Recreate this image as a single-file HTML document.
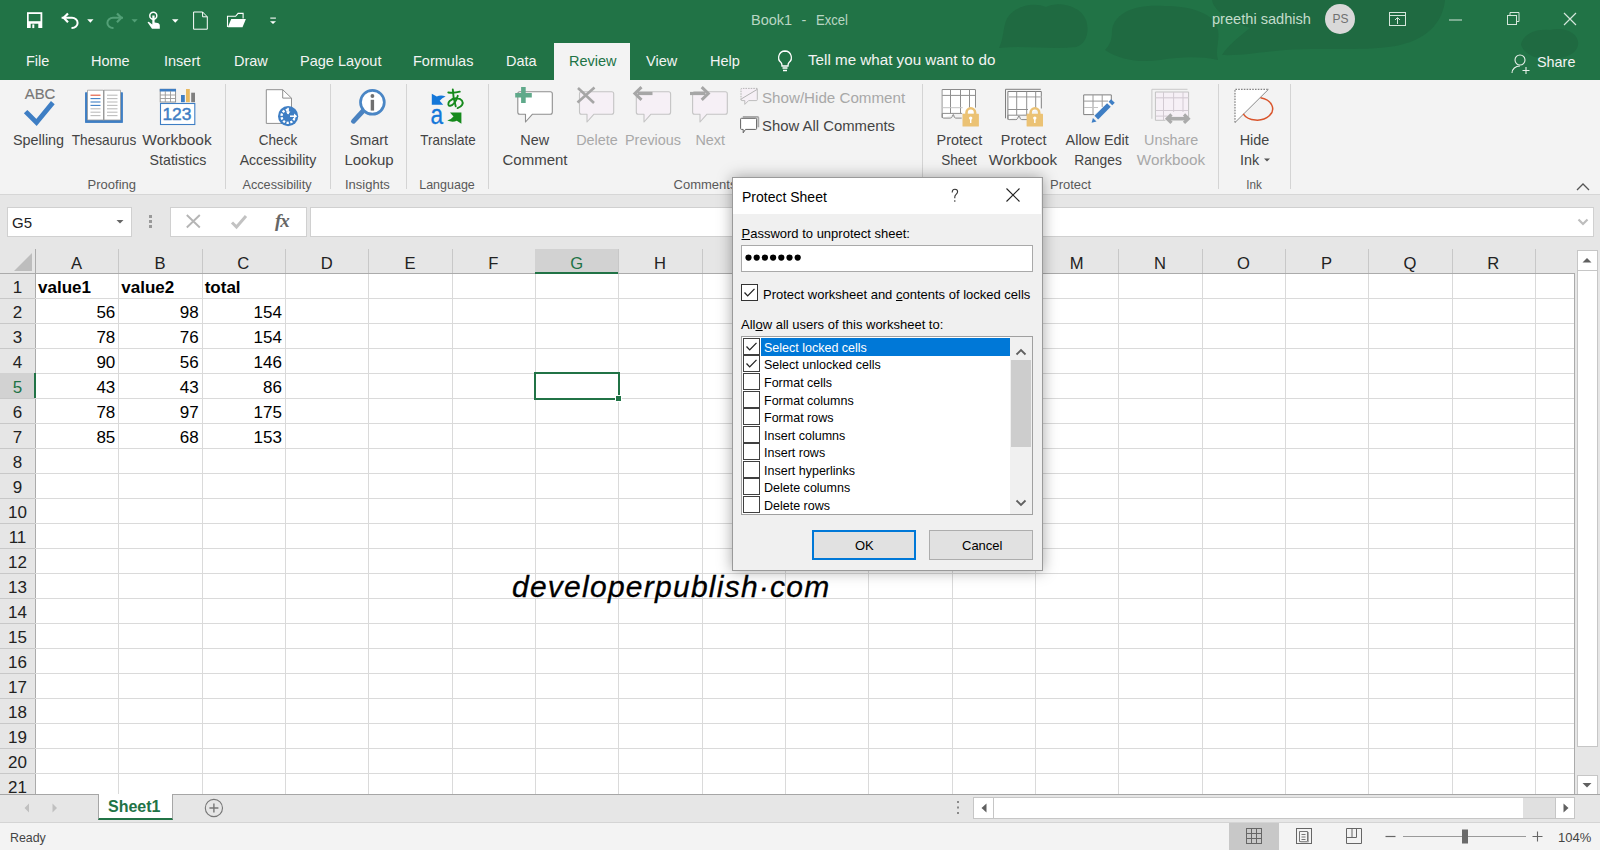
<!DOCTYPE html>
<html><head><meta charset="utf-8">
<style>
*{box-sizing:border-box;margin:0;padding:0}
html,body{width:1600px;height:850px;overflow:hidden;background:#fff;font-family:"Liberation Sans",sans-serif}
.a{position:absolute}
.t{position:absolute;white-space:nowrap;line-height:1}
#title{left:0;top:0;width:1600px;height:80px;background:#217346;overflow:hidden}
#ribbon{left:0;top:80px;width:1600px;height:115px;background:#f3f3f3;border-bottom:1px solid #d6d6d6}
.tab{color:#f3f3f3;font-size:14.5px}
.rb{color:#444;font-size:14.6px;text-align:center}
.gl{color:#666;font-size:13.4px}
.dis{color:#b1b1b1}
.sep{position:absolute;top:84px;width:1px;height:105px;background:#d4d4d4}
#fbar{left:0;top:195px;width:1600px;height:55px;background:#e6e6e6}
#grid{left:0;top:249px;width:1575px;height:546px;overflow:hidden;background:#fff}
.ch{position:absolute;top:0;height:25px;background:#e6e6e6;color:#222;font-size:16px;text-align:center}
.rh{position:absolute;left:0;width:35px;background:#e6e6e6;color:#222;font-size:16px;text-align:center}
.cell{position:absolute;font-size:16px;color:#000}
#tabs{left:0;top:794px;width:1600px;height:29px;background:#e6e6e6}
#status{left:0;top:823px;width:1600px;height:27px;background:#f3f3f3}
#dlg{left:732px;top:177px;width:311px;height:394px;background:#f0f0f0;border:1px solid #9a9a9a;box-shadow:0 0 14px rgba(0,0,0,.35)}
.li{position:absolute;left:0;height:17.5px;width:268px;font-size:13px;color:#000}
.cb{position:absolute;width:16px;height:16px;border:1px solid #333;background:#fff}
</style></head><body>

<!-- TITLE BAR -->
<div id="title" class="a">
  <svg class="a" style="left:0;top:0" width="1600" height="80">
    <g fill="#1f6a41">
      <path d="M999 48C1003 40 1003 32 1005 24C1009 8 1030 1 1046 7C1058 1 1080 5 1086 20C1090 32 1086 44 1076 47C1050 50 1025 45 999 48Z"/>
      <path d="M1105 50C1110 45 1112 40 1112 30C1115 10 1140 4 1165 6C1195 6 1215 15 1218 30C1220 40 1215 50 1218 60C1200 56 1180 57 1160 60C1140 63 1120 60 1105 50Z"/>
      <path d="M1212 0H1445C1443 20 1430 38 1400 45C1370 52 1320 47 1285 50C1260 52 1240 56 1222 55C1228 45 1240 36 1250 28C1232 22 1214 12 1212 0Z"/>
      <path d="M1521 45C1522 35 1535 28 1550 30C1565 26 1580 34 1578 45C1576 56 1560 60 1545 59C1535 58 1525 55 1521 45Z"/>
    </g>
  </svg>
  <!-- QAT -->
  <svg class="a" style="left:0;top:0" width="300" height="40" fill="none" stroke="#fff" stroke-width="1.6">
    <path d="M27 12.2h15.3v15.8H27z" fill="#fff" stroke="none"/>
    <path d="M28.7 14h11.8v7.2H28.7z" fill="#217346" stroke="none"/>
    <path d="M30.7 23.7h7.6v4.4h-7.6z" fill="#217346" stroke="none"/>
    <path d="M32.3 24.4h2v3.7h-2z" fill="#fff" stroke="none"/>
    <path d="M61.6 17.8H72a5.6 5.1 0 0 1 0 10.2h-.5" stroke-width="2"/>
    <path d="M68 13.4l-4.3 4.4l4.3 4.4" stroke-width="2.2"/>
    <path d="M87.2 19.3h6.3l-3.15 3.4z" fill="#fff" stroke="none"/>
    <path d="M123 17.8H113a5.6 5.1 0 0 0 0 10.2h.5" stroke="#53a077" stroke-width="2"/>
    <path d="M117 13.4l4.3 4.4l-4.3 4.4" stroke="#53a077" stroke-width="2.2"/>
    <path d="M131.5 19.3h6.2l-3.1 3.3z" fill="#53a077" stroke="none"/>
    <circle cx="153.3" cy="15.8" r="3.5" stroke-width="1.5"/>
    <path d="M152.3 15.5h2.3v7l3 .6c1.3.3 2.2 1.2 2.2 2.5v3.2h-7.8l-4.5-6.5l1.2-.6l3.6 2.8z" fill="#fff" stroke="none"/>
    <path d="M172 19.3h6.5l-3.25 3.5z" fill="#fff" stroke="none"/>
    <path d="M193.6 12h9l4.7 4.8v12.4h-13.7z" stroke-width="1"/>
    <path d="M202.6 12v4.8h4.7" stroke-width="1"/>
    <path d="M243.1 18.4v-5h-5l-2.5 2.9h-8.1v10.6" stroke-width="1.1"/>
    <path d="M231.2 19.1h14.7l-3.4 8.1h-14.7z" fill="#fff" stroke="none"/>
    <path d="M270.3 18.1h5.6" stroke-width="1.1"/>
    <path d="M270 21.2h6l-3 2.9z" fill="#fff" stroke="none"/>
  </svg>
  <div class="t" style="left:751px;top:12.8px;font-size:14.5px;color:#b9d6c3">Book1</div>
  <div class="t" style="left:801.6px;top:12.8px;font-size:14.5px;color:#b9d6c3">-</div>
  <div class="t" style="left:816.3px;top:12.8px;font-size:14.5px;color:#b9d6c3;transform:scaleX(.9);transform-origin:0 0">Excel</div>
  <div class="t" style="left:1212px;top:12px;font-size:14.6px;color:#c3dccb">preethi sadhish</div>
  <div class="a" style="left:1325px;top:4px;width:30px;height:30px;border-radius:50%;background:#d9d9d9"></div>
  <div class="t" style="left:1332.5px;top:13px;font-size:12px;color:#707070">PS</div>
  <svg class="a" style="left:1380px;top:0" width="220" height="40" fill="none" stroke="#d5e6db" stroke-width="1">
    <rect x="9.5" y="12.5" width="16" height="13"/>
    <path d="M10 15.5h15" />
    <path d="M17.5 24v-6M15 20l2.5-2.5L20 20"/>
    <path d="M69 20h13"/>
    <rect x="127.5" y="15.5" width="9" height="9"/>
    <path d="M130 15.5v-3h9v9h-2.5"/>
    <path d="M184 13l12 12M196 13l-12 12" stroke-width="1.2"/>
  </svg>
  <!-- tabs -->
  <div class="t tab" style="left:26px;top:54px">File</div>
  <div class="t tab" style="left:91px;top:54px">Home</div>
  <div class="t tab" style="left:164px;top:54px">Insert</div>
  <div class="t tab" style="left:234px;top:54px">Draw</div>
  <div class="t tab" style="left:300px;top:54px">Page Layout</div>
  <div class="t tab" style="left:413px;top:54px">Formulas</div>
  <div class="t tab" style="left:506px;top:54px">Data</div>
  <div class="a" style="left:554px;top:43px;width:76px;height:37px;background:#f3f3f3"></div>
  <div class="t tab" style="left:569px;top:54px;color:#217346">Review</div>
  <div class="t tab" style="left:646px;top:54px">View</div>
  <div class="t tab" style="left:710px;top:54px">Help</div>
  <svg class="a" style="left:774px;top:49px" width="22" height="24" fill="none" stroke="#fff" stroke-width="1.3">
    <path d="M11 2a6.5 6.5 0 0 0-4 11.5c1 1 1 2 1 3.5h6c0-1.5 0-2.5 1-3.5A6.5 6.5 0 0 0 11 2z"/>
    <path d="M8.5 19h5M9 21.5h4"/>
  </svg>
  <div class="t tab" style="left:808px;top:51.6px;font-size:15.2px">Tell me what you want to do</div>
  <svg class="a" style="left:1509px;top:52px" width="24" height="24" fill="none" stroke="#e8f0ea" stroke-width="1.1">
    <circle cx="11" cy="8" r="5"/>
    <path d="M3 21c0-4 3.5-7 8-7"/>
    <path d="M17 15v7M13.5 18.5h7"/>
  </svg>
  <div class="t tab" style="left:1537px;top:54.7px;font-size:14.4px">Share</div>
</div>

<!-- RIBBON -->
<div id="ribbon" class="a"></div>
<div id="ribcontent">
<svg class="a" style="left:0;top:0" width="1600" height="200">
<text x="24.8" y="98.7" font-family="Liberation Sans" font-size="15.2" fill="#777" stroke="#777" stroke-width=".15" textLength="30.5" lengthAdjust="spacingAndGlyphs">ABC</text>
<path d="M27.3 113.3l9.2 9.2l14.8-18" fill="none" stroke="#3e7ec4" stroke-width="4.8" stroke-linecap="square"/>
<path d="M85.2 92.5h2.3v26h16.5v0 M120.5 92.5h2.2v30.2h-37.5v-30.2" fill="#3e7ec4" stroke="none"/>
<rect x="85.2" y="92.5" width="37.5" height="30.2" fill="#3e7ec4"/>
<path d="M87.5 90.2h16v29.8h-16z" fill="#fff" stroke="#9a9a9a" stroke-width=".8"/>
<path d="M104 90.2h16.5v29.8H104z" fill="#fff" stroke="#9a9a9a" stroke-width=".8"/>
<path d="M103.6 90v30.5" stroke="#9a9a9a" stroke-width="1"/>
<g stroke-width="1.1">
<path d="M90.5 95.2h10" stroke="#e0553a"/>
<path d="M90.5 98.6h10" stroke="#3e7ec4"/>
<path d="M90.5 102h10" stroke="#3e7ec4"/>
<path d="M90.5 105.4h10" stroke="#3e7ec4"/>
<path d="M90.5 108.8h10" stroke="#bdbdbd"/>
<path d="M90.5 112.2h10" stroke="#bdbdbd"/>
<path d="M90.5 115.6h10" stroke="#bdbdbd"/>
<path d="M107 95.2h10.5" stroke="#bdbdbd"/>
<path d="M107 98.6h10.5" stroke="#bdbdbd"/>
<path d="M107 102h10.5" stroke="#bdbdbd"/>
<path d="M107 105.4h10.5" stroke="#bdbdbd"/>
<path d="M107 108.8h10.5" stroke="#bdbdbd"/>
<path d="M107 112.2h10.5" stroke="#bdbdbd"/>
<path d="M107 115.6h10.5" stroke="#bdbdbd"/>
</g>
<rect x="160.2" y="89.3" width="15.4" height="12.7" fill="#fff" stroke="#8a8a8a" stroke-width=".9"/>
<rect x="159.8" y="88.9" width="16.2" height="2.6" fill="#3e7ec4"/>
<path d="M160 95h15.6M160 98.5h15.6M165.3 91v11M170.5 91v11" stroke="#9a9a9a" stroke-width=".9"/>
<rect x="181" y="95" width="3.8" height="7.2" fill="#3e7ec4"/>
<rect x="186" y="89" width="3.8" height="13.2" fill="#e8b960"/>
<rect x="191.2" y="92.7" width="3.8" height="9.5" fill="#7f7f7f"/>
<rect x="160.5" y="103.5" width="34.3" height="21" fill="#fff" stroke="#3e7ec4" stroke-width="1.1"/>
<text x="162.4" y="119.8" font-family="Liberation Sans" font-size="16.8" fill="#3e7ec4" stroke="#3e7ec4" stroke-width=".45" textLength="29" lengthAdjust="spacingAndGlyphs">123</text>
<path d="M266.3 89.7h16.4l8.8 8.4v25.3h-25.2z" fill="#fff" stroke="#8f8f8f" stroke-width="1"/>
<path d="M282.7 89.7v8.4h8.8" fill="none" stroke="#8f8f8f" stroke-width="1"/>
<circle cx="288.1" cy="116.2" r="10.1" fill="#3e7ec4"/>
<path d="M288.1 109.6A6.6 6.6 0 1 0 294.7 116.2" fill="none" stroke="#fff" stroke-width="2.3" stroke-dasharray="2.3 1.5"/>
<path d="M288.1 107.8v6.2" stroke="#fff" stroke-width="1.5"/><path d="M285.9 111.6l2.2 2.8l2.2-2.8z" fill="#fff"/>
<path d="M290 116.2h5" stroke="#fff" stroke-width="1.5"/><path d="M294 113.6l3.2 2.6l-3.2 2.6z" fill="#fff"/>
<path d="M363 111l-9.6 10.3" stroke="#4a82c0" stroke-width="4.8" stroke-linecap="round"/>
<circle cx="372.4" cy="102.3" r="11.9" fill="#fff" stroke="#4a86c5" stroke-width="2.7"/>
<circle cx="372.4" cy="96" r="1.9" fill="#707070"/>
<path d="M372.4 99.8v10.8" stroke="#707070" stroke-width="3.4"/>
<path d="M431.8 93.8V104.8H443.2L439.7 100.8Q442 97.6 445.6 96.4Q440.5 94.6 436.8 96.6Z" fill="#1477d9"/>
<text x="430.6" y="123.8" font-family="Liberation Sans" font-size="28" fill="#1477d9" stroke="#1477d9" stroke-width=".3" textLength="12.6" lengthAdjust="spacingAndGlyphs">a</text>
<path d="M461.4 123.8V112.6H450L453.5 116.6Q451.2 119.6 447.3 120.6Q452.5 122.6 456.8 120.8Z" fill="#168a1c"/>
<g fill="none" stroke="#168a1c" stroke-width="1.9" stroke-linecap="round"><path d="M448.3 92.5q6 .8 11.5-.8"/><path d="M452.8 89.5c.2 5 1.3 12 2.9 16.8"/><path d="M457.8 95.8c-1.3 5-4.5 9.5-7.5 10c-2.5.4-2.6-3-.4-5c3-3 9.5-3.6 12-.3c2 2.8.2 6.2-4.3 7.6"/></g>
<path d="M519.8 91.8H550.3Q552.3 91.8 552.3 93.8V112.2Q552.3 114.2 550.3 114.2H532.5L525.5 122.0V114.2H519.8Q517.8 114.2 517.8 112.2V93.8Q517.8 91.8 519.8 91.8z" fill="#fff" stroke="#8f8f8f" stroke-width="1.1" stroke-linejoin="round"/>
<path d="M523.4 87v16M515.2 95.2h16.6" stroke="#5fa98a" stroke-width="4.6"/>
<path d="M581.5 91.8H611.7Q613.7 91.8 613.7 93.8V112.2Q613.7 114.2 611.7 114.2H594L587 122.0V114.2H581.5Q579.5 114.2 579.5 112.2V93.8Q579.5 91.8 581.5 91.8z" fill="#f6f0f6" stroke="#c4c4c4" stroke-width="1.1" stroke-linejoin="round"/>
<path d="M577.5 102.5l17-15M578 88l16 15" stroke="#a6a6a6" stroke-width="2.6"/>
<path d="M638.3 91.8H668.6Q670.6 91.8 670.6 93.8V112.2Q670.6 114.2 668.6 114.2H651L644 122.0V114.2H638.3Q636.3 114.2 636.3 112.2V93.8Q636.3 91.8 638.3 91.8z" fill="#f6f0f6" stroke="#c4c4c4" stroke-width="1.1" stroke-linejoin="round"/>
<path d="M652.5 93.5h-15" stroke="#a6a6a6" stroke-width="3.2"/><path d="M641.5 87.2l-6.6 6.3l6.6 6.3" fill="none" stroke="#a6a6a6" stroke-width="3"/>
<path d="M694.6 91.8H725.3Q727.3 91.8 727.3 93.8V112.2Q727.3 114.2 725.3 114.2H707L700 122.0V114.2H694.6Q692.6 114.2 692.6 112.2V93.8Q692.6 91.8 694.6 91.8z" fill="#f6f0f6" stroke="#c4c4c4" stroke-width="1.1" stroke-linejoin="round"/>
<path d="M690 93.5h15.5" stroke="#a6a6a6" stroke-width="3.2"/><path d="M701.7 87.2l6.6 6.3l-6.6 6.3" fill="none" stroke="#a6a6a6" stroke-width="3"/>
<path d="M741 89v10.5q0 1 1 1h2.8v3.8l3.8-3.8h8.2q1 0 1-1v-10.5q0-1-1-1h-14.8q-1 0-1 1z" fill="#f6f0f6" stroke="none"/>
<path d="M741 100V89.2q0-.8.8-.8h15.5" fill="none" stroke="#b4b4b4" stroke-width="1" stroke-dasharray="1.6 1"/>
<path d="M757.3 88.8v10.8q0 1-1 1h-7.7l-3.8 3.8v-3.8h-2.8q-1 0-1-1" fill="none" stroke="#bdbdbd" stroke-width="1"/>
<path d="M741.2 99l16-9.6" stroke="#b4b4b4" stroke-width="1"/>
<path d="M742.8 116.8h14.6q1 0 1 1v9.5" fill="none" stroke="#a8a8a8" stroke-width="1.7"/>
<path d="M741.5 118.3h14.2q.9 0 .9 .9v9.3q0 .9-.9 .9h-10.2l-2.3 3.4v-3.4h-1.7q-.9 0-.9-.9v-9.3q0-.9.9-.9z" fill="#fff" stroke="#606060" stroke-width="1"/>
<path d="M942.2 118V89.6h33.2v18" fill="#fff" stroke="#7f7f7f" stroke-width="1"/>
<rect x="942.7" y="90.1" width="32.2" height="23.3" fill="#fff"/>
<path d="M942.2 95.4h33.2M942.2 113.4h20M950.5 89.6v23.8M960.5 89.6v23.8M969.5 89.6v18" stroke="#8f8f8f" stroke-width="1"/>
<path d="M942.2 107.7h20.5" stroke="#c4c4c4" stroke-width="1"/>
<path d="M942.2 113.4v3.2q0 1.5 1.5 1.5h6.5q1.5 0 2-1.5l1-2.2" fill="none" stroke="#8a8a8a" stroke-width="1"/>
<path d="M953.5 114.5q.4 3.6 2.2 3.6h6" fill="none" stroke="#8a8a8a" stroke-width="1"/>
<path d="M966.5 114.8v-2.2a4.3 4.3 0 0 1 8.6 0v2.2" fill="none" stroke="#ebc274" stroke-width="2.6"/><rect x="962.5" y="113.8" width="16.4" height="12.8" rx=".6" fill="#ebc274"/><circle cx="970.7" cy="118.1" r="1.7" fill="#fff"/><path d="M970.7 118.3v4.6" stroke="#fff" stroke-width="1.4"/>
<path d="M1005.5 118.3V89.3h35.3" fill="none" stroke="#7f7f7f" stroke-width="1"/>
<path d="M1007.9 119.5V91.5h33.4v17" fill="#fff" stroke="#7f7f7f" stroke-width="1"/>
<path d="M1008.3 96.9h33" stroke="#c8c8c8" stroke-width="1.6"/>
<path d="M1008 109.5h20M1008 115.2h20M1016.7 91.5v23.7M1026.7 91.5v23.7M1035.7 91.5v17" stroke="#8f8f8f" stroke-width="1"/>
<path d="M1007.9 115.2v3.2q0 1.2 1.2 1.2h6.8q1.3 0 1.8-1.3l1-2.3" fill="none" stroke="#8a8a8a" stroke-width="1"/>
<path d="M1019.5 116.2q.4 3.4 2.2 3.4h5.5" fill="none" stroke="#8a8a8a" stroke-width="1"/>
<path d="M1030.6 114.8v-2.2a4.3 4.3 0 0 1 8.6 0v2.2" fill="none" stroke="#ebc274" stroke-width="2.6"/><rect x="1026.6" y="113.8" width="16.4" height="12.8" rx=".6" fill="#ebc274"/><circle cx="1034.8" cy="118.1" r="1.7" fill="#fff"/><path d="M1034.8 118.3v4.6" stroke="#fff" stroke-width="1.4"/>
<path d="M1094 114.6h-10.3V94.9h27.6v7" fill="#fff" stroke="#7f7f7f" stroke-width="1"/>
<path d="M1084 101.1h24M1093 94.9v19.5M1102.2 94.9v12" stroke="#9a9a9a" stroke-width="1"/>
<path d="M1084 107.5h14" stroke="#c4c4c4" stroke-width="1"/>
<path d="M1096.3 117.6L1108.9 105" stroke="#3e7ec4" stroke-width="5.2"/>
<path d="M1110.4 103.5L1112.9 101" stroke="#3e7ec4" stroke-width="5.2"/>
<path d="M1091.6 122.8L1092.9 118l3.6 3.6z" fill="#3e7ec4"/>
<path d="M1151.9 118.8V89.3h35.6" fill="none" stroke="#c8c8c8" stroke-width="1"/>
<path d="M1155.4 120.3V92h33.2v27" fill="#f6f0f6" stroke="#c2c2c2" stroke-width="1"/>
<path d="M1155.8 97.8h32.5" stroke="#dcd4dc" stroke-width="1.6"/>
<path d="M1155.8 110.5h32.5M1155.8 116.1h12M1163.5 92v28M1173.6 92v20M1183 92v20" stroke="#d2cad2" stroke-width="1"/>
<path d="M1155.4 120.3h10" stroke="#c2c2c2" stroke-width="1"/>
<path d="M1168 118.7h19" stroke="#ababab" stroke-width="3.6"/><path d="M1171.5 114.5l-4.3 4.2l4.3 4.2M1184 114.5l4.3 4.2l-4.3 4.2" fill="none" stroke="#ababab" stroke-width="3.2"/>
<path d="M1235 89.3h33.5l-33.5 33.2z" fill="#fff"/>
<path d="M1235 122.5V89.3h33.5" fill="none" stroke="#555" stroke-width=".9" stroke-dasharray="1.6 1.2"/>
<path d="M1268.5 89.3l-33.5 33.2" stroke="#8a8a8a" stroke-width="1"/>
<path d="M1260.5 97.8A15.5 11.3 0 1 1 1243.2 113.8" fill="none" stroke="#d9542b" stroke-width="1.5"/>
</svg>

<div class="a" style="left:225px;top:84px;width:1px;height:105px;background:#d4d4d4"></div>
<div class="a" style="left:330px;top:84px;width:1px;height:105px;background:#d4d4d4"></div>
<div class="a" style="left:406px;top:84px;width:1px;height:105px;background:#d4d4d4"></div>
<div class="a" style="left:488px;top:84px;width:1px;height:105px;background:#d4d4d4"></div>
<div class="a" style="left:922px;top:84px;width:1px;height:105px;background:#d4d4d4"></div>
<div class="a" style="left:1218px;top:84px;width:1px;height:105px;background:#d4d4d4"></div>
<div class="a" style="left:1290px;top:84px;width:1px;height:105px;background:#d4d4d4"></div>
<div class="t" style="left:-21.5px;top:132.6px;width:120px;text-align:center;font-size:14.4px;color:#444;">Spelling</div>
<div class="t" style="left:43.5px;top:132.6px;width:120px;text-align:center;font-size:14.4px;color:#444;transform:scaleX(0.949);">Thesaurus</div>
<div class="t" style="left:117.4px;top:132.6px;width:120px;text-align:center;font-size:14.4px;color:#444;transform:scaleX(1.074);">Workbook</div>
<div class="t" style="left:117.5px;top:152.8px;width:120px;text-align:center;font-size:14.4px;color:#444;transform:scaleX(0.986);">Statistics</div>
<div class="t" style="left:51.8px;top:178.0px;width:120px;text-align:center;font-size:13px;color:#595959;">Proofing</div>
<div class="t" style="left:218.0px;top:132.6px;width:120px;text-align:center;font-size:14.4px;color:#444;transform:scaleX(0.940);">Check</div>
<div class="t" style="left:217.9px;top:152.8px;width:120px;text-align:center;font-size:14.4px;color:#444;transform:scaleX(0.978);">Accessibility</div>
<div class="t" style="left:217.3px;top:178.0px;width:120px;text-align:center;font-size:13px;color:#595959;transform:scaleX(0.975);">Accessibility</div>
<div class="t" style="left:308.9px;top:132.6px;width:120px;text-align:center;font-size:14.4px;color:#444;">Smart</div>
<div class="t" style="left:308.5px;top:152.8px;width:120px;text-align:center;font-size:14.4px;color:#444;transform:scaleX(1.043);">Lookup</div>
<div class="t" style="left:307.4px;top:178.0px;width:120px;text-align:center;font-size:13px;color:#595959;">Insights</div>
<div class="t" style="left:388.0px;top:132.6px;width:120px;text-align:center;font-size:14.4px;color:#444;transform:scaleX(0.933);">Translate</div>
<div class="t" style="left:386.9px;top:178.0px;width:120px;text-align:center;font-size:13px;color:#595959;transform:scaleX(0.960);">Language</div>
<div class="t" style="left:474.7px;top:132.6px;width:120px;text-align:center;font-size:14.4px;color:#444;">New</div>
<div class="t" style="left:474.5px;top:152.8px;width:120px;text-align:center;font-size:14.4px;color:#444;transform:scaleX(1.041);">Comment</div>
<div class="t" style="left:537.0px;top:132.6px;width:120px;text-align:center;font-size:14.4px;color:#a8a8a8;">Delete</div>
<div class="t" style="left:593.0px;top:132.6px;width:120px;text-align:center;font-size:14.4px;color:#a8a8a8;">Previous</div>
<div class="t" style="left:650.2px;top:132.6px;width:120px;text-align:center;font-size:14.4px;color:#a8a8a8;">Next</div>
<div class="t" style="left:673.6px;top:178.0px;font-size:13px;color:#595959;">Comments</div>
<div class="t" style="left:762.2px;top:90.9px;font-size:14.4px;color:#a8a8a8;transform:scaleX(1.053);transform-origin:0 0;">Show/Hide Comment</div>
<div class="t" style="left:762.2px;top:119.3px;font-size:14.4px;color:#444;transform:scaleX(1.033);transform-origin:0 0;">Show All Comments</div>
<div class="t" style="left:899.4px;top:132.6px;width:120px;text-align:center;font-size:14.4px;color:#444;">Protect</div>
<div class="t" style="left:899.2px;top:152.8px;width:120px;text-align:center;font-size:14.4px;color:#444;transform:scaleX(0.947);">Sheet</div>
<div class="t" style="left:963.6px;top:132.6px;width:120px;text-align:center;font-size:14.4px;color:#444;">Protect</div>
<div class="t" style="left:963.4px;top:152.8px;width:120px;text-align:center;font-size:14.4px;color:#444;transform:scaleX(1.058);">Workbook</div>
<div class="t" style="left:1037.2px;top:132.6px;width:120px;text-align:center;font-size:14.4px;color:#444;">Allow Edit</div>
<div class="t" style="left:1037.5px;top:152.8px;width:120px;text-align:center;font-size:14.4px;color:#444;transform:scaleX(0.960);">Ranges</div>
<div class="t" style="left:1111.2px;top:132.6px;width:120px;text-align:center;font-size:14.4px;color:#a8a8a8;">Unshare</div>
<div class="t" style="left:1111.0px;top:152.8px;width:120px;text-align:center;font-size:14.4px;color:#a8a8a8;transform:scaleX(1.058);">Workbook</div>
<div class="t" style="left:1010.6px;top:178.0px;width:120px;text-align:center;font-size:13px;color:#595959;">Protect</div>
<div class="t" style="left:1194.5px;top:132.6px;width:120px;text-align:center;font-size:14.4px;color:#444;">Hide</div>
<div class="t" style="left:1240.0px;top:152.8px;font-size:14.4px;color:#444;">Ink</div>
<div class="t" style="left:1193.5px;top:178.0px;width:120px;text-align:center;font-size:13px;color:#595959;transform:scaleX(0.900);">Ink</div>
<svg class="a" style="left:1262px;top:156px" width="10" height="8"><path d="M2 2.5h6l-3 3z" fill="#555"/></svg>
<svg class="a" style="left:1574px;top:180px" width="18" height="12" fill="none" stroke="#555" stroke-width="1.3"><path d="M3 10l6-6l6 6"/></svg>

</div>

<!-- FORMULA BAR -->
<div id="fbar" class="a">
  <div class="a" style="left:7px;top:12px;width:125px;height:30px;background:#fff;border:1px solid #d0d0d0"></div>
  <div class="t" style="left:12px;top:20px;font-size:15px;color:#222">G5</div>
  <svg class="a" style="left:115px;top:23px" width="10" height="8"><path d="M1.5 2h7l-3.5 3.5z" fill="#666"/></svg>
  <div class="a" style="left:149px;top:20px;width:2.5px;height:2.5px;background:#999;box-shadow:0 5px 0 #999,0 10px 0 #999"></div>
  <div class="a" style="left:170px;top:12px;width:137px;height:30px;background:#fff;border:1px solid #d0d0d0"></div>
  <svg class="a" style="left:170px;top:12px" width="137" height="30" fill="none">
    <path d="M16.8 4l13 12.5M29.8 4l-13 12.5" stroke="#b5b5b5" stroke-width="1.9" transform="translate(0,4)"/>
    <path d="M62 23l4.5 4.5l9.5-11" stroke="#c2c2c2" stroke-width="3" transform="translate(0,-7.5)"/>
  </svg>
  <div class="t" style="left:275px;top:16px;font-size:19px;color:#666;font-family:'Liberation Serif',serif;font-style:italic;font-weight:700;letter-spacing:-1px">fx</div>
  <div class="a" style="left:310px;top:12px;width:1284px;height:30px;background:#fff;border:1px solid #d0d0d0"></div>
  <svg class="a" style="left:1576px;top:22px" width="14" height="10" fill="none" stroke="#bdbdbd" stroke-width="2.2"><path d="M2.5 2.5l4.5 4.5l4.5-4.5"/></svg>
</div>

<!-- GRID -->
<div id="grid" class="a">
<div class="a" style="left:0;top:0;width:1575px;height:25px;background:#e6e6e6;border-bottom:1px solid #ababab"></div>
<div class="a" style="left:0;top:25px;width:36px;height:521px;background:#e6e6e6;border-right:1px solid #ababab"></div>
<div class="a" style="left:35px;top:0;width:1px;height:25px;background:#ababab"></div>
<svg class="a" style="left:0;top:0" width="35" height="25"><path d="M32 4V22H14z" fill="#bdbdbd"/></svg>
<div class="t" style="left:35.0px;top:6.5px;width:83.3px;text-align:center;font-size:16.6px;color:#222">A</div>
<div class="a" style="left:118px;top:0;width:1px;height:24px;background:#c8c8c8"></div>
<div class="t" style="left:118.3px;top:6.5px;width:83.3px;text-align:center;font-size:16.6px;color:#222">B</div>
<div class="a" style="left:202px;top:0;width:1px;height:24px;background:#c8c8c8"></div>
<div class="t" style="left:201.7px;top:6.5px;width:83.3px;text-align:center;font-size:16.6px;color:#222">C</div>
<div class="a" style="left:285px;top:0;width:1px;height:24px;background:#c8c8c8"></div>
<div class="t" style="left:285.0px;top:6.5px;width:83.3px;text-align:center;font-size:16.6px;color:#222">D</div>
<div class="a" style="left:368px;top:0;width:1px;height:24px;background:#c8c8c8"></div>
<div class="t" style="left:368.3px;top:6.5px;width:83.3px;text-align:center;font-size:16.6px;color:#222">E</div>
<div class="a" style="left:452px;top:0;width:1px;height:24px;background:#c8c8c8"></div>
<div class="t" style="left:451.7px;top:6.5px;width:83.3px;text-align:center;font-size:16.6px;color:#222">F</div>
<div class="a" style="left:535px;top:0;width:1px;height:24px;background:#c8c8c8"></div>
<div class="a" style="left:535.0px;top:0;width:83.3px;height:25px;background:#d2d2d2;border-bottom:2px solid #217346"></div>
<div class="t" style="left:535.0px;top:6.5px;width:83.3px;text-align:center;font-size:16.6px;color:#217346">G</div>
<div class="a" style="left:618px;top:0;width:1px;height:24px;background:#c8c8c8"></div>
<div class="t" style="left:618.3px;top:6.5px;width:83.3px;text-align:center;font-size:16.6px;color:#222">H</div>
<div class="a" style="left:702px;top:0;width:1px;height:24px;background:#c8c8c8"></div>
<div class="t" style="left:701.7px;top:6.5px;width:83.3px;text-align:center;font-size:16.6px;color:#222">I</div>
<div class="a" style="left:785px;top:0;width:1px;height:24px;background:#c8c8c8"></div>
<div class="t" style="left:785.0px;top:6.5px;width:83.3px;text-align:center;font-size:16.6px;color:#222">J</div>
<div class="a" style="left:868px;top:0;width:1px;height:24px;background:#c8c8c8"></div>
<div class="t" style="left:868.3px;top:6.5px;width:83.3px;text-align:center;font-size:16.6px;color:#222">K</div>
<div class="a" style="left:952px;top:0;width:1px;height:24px;background:#c8c8c8"></div>
<div class="t" style="left:951.7px;top:6.5px;width:83.3px;text-align:center;font-size:16.6px;color:#222">L</div>
<div class="a" style="left:1035px;top:0;width:1px;height:24px;background:#c8c8c8"></div>
<div class="t" style="left:1035.0px;top:6.5px;width:83.3px;text-align:center;font-size:16.6px;color:#222">M</div>
<div class="a" style="left:1118px;top:0;width:1px;height:24px;background:#c8c8c8"></div>
<div class="t" style="left:1118.3px;top:6.5px;width:83.3px;text-align:center;font-size:16.6px;color:#222">N</div>
<div class="a" style="left:1202px;top:0;width:1px;height:24px;background:#c8c8c8"></div>
<div class="t" style="left:1201.7px;top:6.5px;width:83.3px;text-align:center;font-size:16.6px;color:#222">O</div>
<div class="a" style="left:1285px;top:0;width:1px;height:24px;background:#c8c8c8"></div>
<div class="t" style="left:1285.0px;top:6.5px;width:83.3px;text-align:center;font-size:16.6px;color:#222">P</div>
<div class="a" style="left:1368px;top:0;width:1px;height:24px;background:#c8c8c8"></div>
<div class="t" style="left:1368.3px;top:6.5px;width:83.3px;text-align:center;font-size:16.6px;color:#222">Q</div>
<div class="a" style="left:1452px;top:0;width:1px;height:24px;background:#c8c8c8"></div>
<div class="t" style="left:1451.7px;top:6.5px;width:83.3px;text-align:center;font-size:16.6px;color:#222">R</div>
<div class="a" style="left:1535px;top:0;width:1px;height:24px;background:#c8c8c8"></div>
<div class="a" style="left:118px;top:25px;width:1px;height:521px;background:#dadada"></div>
<div class="a" style="left:202px;top:25px;width:1px;height:521px;background:#dadada"></div>
<div class="a" style="left:285px;top:25px;width:1px;height:521px;background:#dadada"></div>
<div class="a" style="left:368px;top:25px;width:1px;height:521px;background:#dadada"></div>
<div class="a" style="left:452px;top:25px;width:1px;height:521px;background:#dadada"></div>
<div class="a" style="left:535px;top:25px;width:1px;height:521px;background:#dadada"></div>
<div class="a" style="left:618px;top:25px;width:1px;height:521px;background:#dadada"></div>
<div class="a" style="left:702px;top:25px;width:1px;height:521px;background:#dadada"></div>
<div class="a" style="left:785px;top:25px;width:1px;height:521px;background:#dadada"></div>
<div class="a" style="left:868px;top:25px;width:1px;height:521px;background:#dadada"></div>
<div class="a" style="left:952px;top:25px;width:1px;height:521px;background:#dadada"></div>
<div class="a" style="left:1035px;top:25px;width:1px;height:521px;background:#dadada"></div>
<div class="a" style="left:1118px;top:25px;width:1px;height:521px;background:#dadada"></div>
<div class="a" style="left:1202px;top:25px;width:1px;height:521px;background:#dadada"></div>
<div class="a" style="left:1285px;top:25px;width:1px;height:521px;background:#dadada"></div>
<div class="a" style="left:1368px;top:25px;width:1px;height:521px;background:#dadada"></div>
<div class="a" style="left:1452px;top:25px;width:1px;height:521px;background:#dadada"></div>
<div class="a" style="left:1535px;top:25px;width:1px;height:521px;background:#dadada"></div>
<div class="t" style="left:0;top:30.2px;width:35px;text-align:center;font-size:17px;color:#222">1</div>
<div class="a" style="left:0;top:49px;width:35px;height:1px;background:#c8c8c8"></div>
<div class="a" style="left:35px;top:49px;width:1540px;height:1px;background:#dadada"></div>
<div class="t" style="left:0;top:55.2px;width:35px;text-align:center;font-size:17px;color:#222">2</div>
<div class="a" style="left:0;top:74px;width:35px;height:1px;background:#c8c8c8"></div>
<div class="a" style="left:35px;top:74px;width:1540px;height:1px;background:#dadada"></div>
<div class="t" style="left:0;top:80.2px;width:35px;text-align:center;font-size:17px;color:#222">3</div>
<div class="a" style="left:0;top:99px;width:35px;height:1px;background:#c8c8c8"></div>
<div class="a" style="left:35px;top:99px;width:1540px;height:1px;background:#dadada"></div>
<div class="t" style="left:0;top:105.2px;width:35px;text-align:center;font-size:17px;color:#222">4</div>
<div class="a" style="left:0;top:124px;width:35px;height:1px;background:#c8c8c8"></div>
<div class="a" style="left:35px;top:124px;width:1540px;height:1px;background:#dadada"></div>
<div class="a" style="left:0;top:124px;width:36px;height:26px;background:#d2d2d2;border-right:2px solid #217346"></div>
<div class="t" style="left:0;top:130.2px;width:35px;text-align:center;font-size:17px;color:#217346">5</div>
<div class="a" style="left:0;top:149px;width:35px;height:1px;background:#c8c8c8"></div>
<div class="a" style="left:35px;top:149px;width:1540px;height:1px;background:#dadada"></div>
<div class="t" style="left:0;top:155.2px;width:35px;text-align:center;font-size:17px;color:#222">6</div>
<div class="a" style="left:0;top:174px;width:35px;height:1px;background:#c8c8c8"></div>
<div class="a" style="left:35px;top:174px;width:1540px;height:1px;background:#dadada"></div>
<div class="t" style="left:0;top:180.2px;width:35px;text-align:center;font-size:17px;color:#222">7</div>
<div class="a" style="left:0;top:199px;width:35px;height:1px;background:#c8c8c8"></div>
<div class="a" style="left:35px;top:199px;width:1540px;height:1px;background:#dadada"></div>
<div class="t" style="left:0;top:205.2px;width:35px;text-align:center;font-size:17px;color:#222">8</div>
<div class="a" style="left:0;top:224px;width:35px;height:1px;background:#c8c8c8"></div>
<div class="a" style="left:35px;top:224px;width:1540px;height:1px;background:#dadada"></div>
<div class="t" style="left:0;top:230.2px;width:35px;text-align:center;font-size:17px;color:#222">9</div>
<div class="a" style="left:0;top:249px;width:35px;height:1px;background:#c8c8c8"></div>
<div class="a" style="left:35px;top:249px;width:1540px;height:1px;background:#dadada"></div>
<div class="t" style="left:0;top:255.2px;width:35px;text-align:center;font-size:17px;color:#222">10</div>
<div class="a" style="left:0;top:274px;width:35px;height:1px;background:#c8c8c8"></div>
<div class="a" style="left:35px;top:274px;width:1540px;height:1px;background:#dadada"></div>
<div class="t" style="left:0;top:280.2px;width:35px;text-align:center;font-size:17px;color:#222">11</div>
<div class="a" style="left:0;top:299px;width:35px;height:1px;background:#c8c8c8"></div>
<div class="a" style="left:35px;top:299px;width:1540px;height:1px;background:#dadada"></div>
<div class="t" style="left:0;top:305.2px;width:35px;text-align:center;font-size:17px;color:#222">12</div>
<div class="a" style="left:0;top:324px;width:35px;height:1px;background:#c8c8c8"></div>
<div class="a" style="left:35px;top:324px;width:1540px;height:1px;background:#dadada"></div>
<div class="t" style="left:0;top:330.2px;width:35px;text-align:center;font-size:17px;color:#222">13</div>
<div class="a" style="left:0;top:349px;width:35px;height:1px;background:#c8c8c8"></div>
<div class="a" style="left:35px;top:349px;width:1540px;height:1px;background:#dadada"></div>
<div class="t" style="left:0;top:355.2px;width:35px;text-align:center;font-size:17px;color:#222">14</div>
<div class="a" style="left:0;top:374px;width:35px;height:1px;background:#c8c8c8"></div>
<div class="a" style="left:35px;top:374px;width:1540px;height:1px;background:#dadada"></div>
<div class="t" style="left:0;top:380.2px;width:35px;text-align:center;font-size:17px;color:#222">15</div>
<div class="a" style="left:0;top:399px;width:35px;height:1px;background:#c8c8c8"></div>
<div class="a" style="left:35px;top:399px;width:1540px;height:1px;background:#dadada"></div>
<div class="t" style="left:0;top:405.2px;width:35px;text-align:center;font-size:17px;color:#222">16</div>
<div class="a" style="left:0;top:424px;width:35px;height:1px;background:#c8c8c8"></div>
<div class="a" style="left:35px;top:424px;width:1540px;height:1px;background:#dadada"></div>
<div class="t" style="left:0;top:430.2px;width:35px;text-align:center;font-size:17px;color:#222">17</div>
<div class="a" style="left:0;top:449px;width:35px;height:1px;background:#c8c8c8"></div>
<div class="a" style="left:35px;top:449px;width:1540px;height:1px;background:#dadada"></div>
<div class="t" style="left:0;top:455.2px;width:35px;text-align:center;font-size:17px;color:#222">18</div>
<div class="a" style="left:0;top:474px;width:35px;height:1px;background:#c8c8c8"></div>
<div class="a" style="left:35px;top:474px;width:1540px;height:1px;background:#dadada"></div>
<div class="t" style="left:0;top:480.2px;width:35px;text-align:center;font-size:17px;color:#222">19</div>
<div class="a" style="left:0;top:499px;width:35px;height:1px;background:#c8c8c8"></div>
<div class="a" style="left:35px;top:499px;width:1540px;height:1px;background:#dadada"></div>
<div class="t" style="left:0;top:505.2px;width:35px;text-align:center;font-size:17px;color:#222">20</div>
<div class="a" style="left:0;top:524px;width:35px;height:1px;background:#c8c8c8"></div>
<div class="a" style="left:35px;top:524px;width:1540px;height:1px;background:#dadada"></div>
<div class="t" style="left:0;top:530.2px;width:35px;text-align:center;font-size:17px;color:#222">21</div>
<div class="a" style="left:0;top:549px;width:35px;height:1px;background:#c8c8c8"></div>
<div class="a" style="left:35px;top:549px;width:1540px;height:1px;background:#dadada"></div>
<div class="t" style="left:0;top:555.2px;width:35px;text-align:center;font-size:17px;color:#222">22</div>
<div class="a" style="left:0;top:574px;width:35px;height:1px;background:#c8c8c8"></div>
<div class="a" style="left:35px;top:574px;width:1540px;height:1px;background:#dadada"></div>
<div class="t" style="left:38.0px;top:30px;font-size:17px;font-weight:700;color:#000">value1</div>
<div class="t" style="left:121.3px;top:30px;font-size:17px;font-weight:700;color:#000">value2</div>
<div class="t" style="left:204.7px;top:30px;font-size:17px;font-weight:700;color:#000">total</div>
<div class="t" style="left:35.0px;top:55px;width:80.3px;text-align:right;font-size:17px;color:#000">56</div>
<div class="t" style="left:118.3px;top:55px;width:80.3px;text-align:right;font-size:17px;color:#000">98</div>
<div class="t" style="left:201.7px;top:55px;width:80.3px;text-align:right;font-size:17px;color:#000">154</div>
<div class="t" style="left:35.0px;top:80px;width:80.3px;text-align:right;font-size:17px;color:#000">78</div>
<div class="t" style="left:118.3px;top:80px;width:80.3px;text-align:right;font-size:17px;color:#000">76</div>
<div class="t" style="left:201.7px;top:80px;width:80.3px;text-align:right;font-size:17px;color:#000">154</div>
<div class="t" style="left:35.0px;top:105px;width:80.3px;text-align:right;font-size:17px;color:#000">90</div>
<div class="t" style="left:118.3px;top:105px;width:80.3px;text-align:right;font-size:17px;color:#000">56</div>
<div class="t" style="left:201.7px;top:105px;width:80.3px;text-align:right;font-size:17px;color:#000">146</div>
<div class="t" style="left:35.0px;top:130px;width:80.3px;text-align:right;font-size:17px;color:#000">43</div>
<div class="t" style="left:118.3px;top:130px;width:80.3px;text-align:right;font-size:17px;color:#000">43</div>
<div class="t" style="left:201.7px;top:130px;width:80.3px;text-align:right;font-size:17px;color:#000">86</div>
<div class="t" style="left:35.0px;top:155px;width:80.3px;text-align:right;font-size:17px;color:#000">78</div>
<div class="t" style="left:118.3px;top:155px;width:80.3px;text-align:right;font-size:17px;color:#000">97</div>
<div class="t" style="left:201.7px;top:155px;width:80.3px;text-align:right;font-size:17px;color:#000">175</div>
<div class="t" style="left:35.0px;top:180px;width:80.3px;text-align:right;font-size:17px;color:#000">85</div>
<div class="t" style="left:118.3px;top:180px;width:80.3px;text-align:right;font-size:17px;color:#000">68</div>
<div class="t" style="left:201.7px;top:180px;width:80.3px;text-align:right;font-size:17px;color:#000">153</div>
<div class="a" style="left:534px;top:123px;width:86px;height:28px;border:2px solid #217346"></div>
<div class="a" style="left:615px;top:146px;width:7px;height:7px;background:#217346;border:1px solid #fff"></div>
<div class="a" style="left:1574px;top:25px;width:1px;height:521px;background:#ababab"></div>

</div>

<div class="t" style="left:512px;top:572px;font-size:30px;font-style:italic;letter-spacing:1.25px;color:#000;-webkit-text-stroke:.3px #000">developerpublish·com</div>

<!-- SCROLLBAR -->
<div class="a" style="left:1575px;top:249px;width:25px;height:546px;background:#e6e6e6"></div>
<div class="a" style="left:1577px;top:250px;width:21px;height:497px;background:#fff;border:1px solid #c6c6c6"></div>
<div class="a" style="left:1577px;top:250px;width:21px;height:21px;background:#fff;border:1px solid #c6c6c6"></div>
<svg class="a" style="left:1577px;top:250px" width="21" height="21"><path d="M5.5 12.5h9l-4.5-4.5z" fill="#606060"/></svg>
<div class="a" style="left:1577px;top:775px;width:21px;height:20px;background:#fff;border:1px solid #c6c6c6"></div>
<svg class="a" style="left:1577px;top:775px" width="21" height="20"><path d="M5.5 8h9l-4.5 4.5z" fill="#606060"/></svg>

<!-- SHEET TABS -->
<div id="tabs" class="a" style="border-top:1px solid #a6a6a6;border-bottom:1px solid #d4d4d4"></div>
<svg class="a" style="left:0;top:795px" width="300" height="27">
  <path d="M29 8.5v9l-4.5-4.5z" fill="#c0c0c0"/>
  <path d="M52.5 8.5v9l4.5-4.5z" fill="#c0c0c0"/>
</svg>
<div class="a" style="left:98px;top:794px;width:75px;height:26px;background:#fff;border-left:1px solid #a6a6a6;border-right:1px solid #a6a6a6;border-bottom:2px solid #217346"></div>
<div class="t" style="left:108px;top:799px;font-size:16px;font-weight:700;color:#217346">Sheet1</div>
<svg class="a" style="left:200px;top:795px" width="28" height="27" fill="none" stroke="#777" stroke-width="1.1">
  <circle cx="13.9" cy="13" r="8.6"/>
  <path d="M13.9 8.5v9M9.4 13h9" stroke-width="1.4"/>
</svg>
<div class="a" style="left:957px;top:801px;width:2px;height:2px;background:#8a8a8a;box-shadow:0 5.5px 0 #8a8a8a,0 11px 0 #8a8a8a"></div>
<div class="a" style="left:973px;top:797px;width:602px;height:22px;background:#fff;border:1px solid #c6c6c6"></div>
<div class="a" style="left:993px;top:798px;width:1px;height:20px;background:#c6c6c6"></div>
<div class="a" style="left:1523px;top:798px;width:32px;height:20px;background:#e0e0e0"></div>
<div class="a" style="left:1555px;top:797px;width:1px;height:22px;background:#c6c6c6"></div>
<svg class="a" style="left:973px;top:797px" width="602" height="22">
  <path d="M13.5 6.5v9l-5-4.5z" fill="#606060"/>
  <path d="M590.5 6.5v9l5-4.5z" fill="#606060"/>
</svg>

<!-- STATUS -->
<div id="status" class="a">
  <div class="t" style="left:10px;top:8.8px;font-size:12.4px;color:#444">Ready</div>
  <div class="a" style="left:1229px;top:0;width:50px;height:27px;background:#c8c8c8"></div>
  <svg class="a" style="left:1240px;top:-1px" width="360" height="28" fill="none" stroke="#666" stroke-width="1">
    <rect x="6.5" y="6.5" width="15" height="15"/>
    <path d="M11.5 6.5v15M16.5 6.5v15M6.5 11.5h15M6.5 16.5h15"/>
    <rect x="56.5" y="6.5" width="15" height="15"/>
    <path d="M59.5 9.5h8v10h-8z" stroke-width=".9"/>
    <path d="M68.5 10v10h-8" stroke="#aaa" stroke-width="1"/>
    <path d="M61.5 12.5h4M61.5 15h4M61.5 17.5h4" stroke-width=".9"/>
    <path d="M106.5 6.5h15v15h-15z"/>
    <path d="M112 6.5v9M116.5 6.5v9M106.5 15.5h10" />
    <path d="M145.5 14.5h10" stroke-width="1.2"/>
    <path d="M163 14.5h123" stroke="#9a9a9a"/>
    <rect x="222" y="7.5" width="6" height="14" fill="#6a6a6a" stroke="none"/>
    <path d="M292.5 14.5h10M297.5 9.5v10" stroke-width="1.1"/>
  </svg>
  <div class="t" style="left:1558px;top:8px;font-size:13px;color:#444">104%</div>
</div>

<!-- DIALOG -->
<div id="dlg" class="a"></div>
<div id="dlgc">
<div class="a" style="left:733px;top:178px;width:308px;height:36px;background:#fff"></div>
<div class="t" style="left:742px;top:189.9px;font-size:14px;color:#000;">Protect Sheet</div>
<svg class="a" style="left:945px;top:182px" width="20" height="24" fill="none" stroke="#333" stroke-width="1.1"><path d="M7.2 10.5c0-2.6 1.3-3.3 2.7-3.3c1.6 0 2.7 1 2.7 2.6c0 1.6-1 2.2-1.8 2.9c-.8.6-1 1.2-1 2.3v1.2"/><circle cx="9.8" cy="19" r=".8" fill="#333" stroke="none"/></svg>
<svg class="a" style="left:1000px;top:182px" width="26" height="26" fill="none" stroke="#222" stroke-width="1.1"><path d="M6.5 6.5l13 13M19.5 6.5l-13 13"/></svg>
<div class="t" style="left:741.5px;top:226.6px;font-size:13px;color:#000;"><u>P</u>assword to unprotect sheet:</div>
<div class="a" style="left:741px;top:245px;width:292px;height:27px;background:#fff;border:1px solid #a9a9a9"></div>
<svg class="a" style="left:741px;top:245px" width="100" height="27" fill="#000"><circle cx="7.5" cy="12.6" r="3.1"/><circle cx="15.7" cy="12.6" r="3.1"/><circle cx="23.9" cy="12.6" r="3.1"/><circle cx="32.1" cy="12.6" r="3.1"/><circle cx="40.3" cy="12.6" r="3.1"/><circle cx="48.5" cy="12.6" r="3.1"/><circle cx="56.7" cy="12.6" r="3.1"/></svg>
<div class="cb" style="left:741px;top:284px;width:17px;height:17px"></div>
<svg class="a" style="left:741px;top:284px" width="17" height="17" fill="none" stroke="#222" stroke-width="1.3"><path d="M3.5 8.5l3.2 3.4l6.8-7"/></svg>
<div class="t" style="left:763px;top:287.5px;font-size:13px;color:#000;">Protect worksheet and <u>c</u>ontents of locked cells</div>
<div class="t" style="left:741px;top:318.0px;font-size:13px;color:#000;">All<u>o</u>w all users of this worksheet to:</div>
<div class="a" style="left:741px;top:336px;width:292px;height:179px;background:#fff;border:1px solid #a0a0a0"></div>
<div class="a" style="left:761px;top:338.0px;width:249px;height:17.5px;background:#0078d7"></div>
<div class="a" style="left:743px;top:338.0px;width:17px;height:17px;border:1px solid #404040;background:#fff"></div>
<svg class="a" style="left:743px;top:338.0px" width="17" height="17" fill="none" stroke="#222" stroke-width="1.3"><path d="M3.5 8.5l3.2 3.4l6.8-7"/></svg>
<div class="t" style="left:764px;top:341.3px;font-size:13px;color:#fff;transform:scaleX(.962);transform-origin:0 0;">Select locked cells</div>
<div class="a" style="left:743px;top:355.0px;width:17px;height:17px;border:1px solid #404040;background:#fff"></div>
<svg class="a" style="left:743px;top:355.0px" width="17" height="17" fill="none" stroke="#222" stroke-width="1.3"><path d="M3.5 8.5l3.2 3.4l6.8-7"/></svg>
<div class="t" style="left:764px;top:358.3px;font-size:13px;color:#000;transform:scaleX(.962);transform-origin:0 0;">Select unlocked cells</div>
<div class="a" style="left:743px;top:373.0px;width:17px;height:17px;border:1px solid #404040;background:#fff"></div>
<div class="t" style="left:764px;top:376.3px;font-size:13px;color:#000;transform:scaleX(.962);transform-origin:0 0;">Format cells</div>
<div class="a" style="left:743px;top:391.0px;width:17px;height:17px;border:1px solid #404040;background:#fff"></div>
<div class="t" style="left:764px;top:394.3px;font-size:13px;color:#000;transform:scaleX(.962);transform-origin:0 0;">Format columns</div>
<div class="a" style="left:743px;top:408.0px;width:17px;height:17px;border:1px solid #404040;background:#fff"></div>
<div class="t" style="left:764px;top:411.3px;font-size:13px;color:#000;transform:scaleX(.962);transform-origin:0 0;">Format rows</div>
<div class="a" style="left:743px;top:426.0px;width:17px;height:17px;border:1px solid #404040;background:#fff"></div>
<div class="t" style="left:764px;top:429.3px;font-size:13px;color:#000;transform:scaleX(.962);transform-origin:0 0;">Insert columns</div>
<div class="a" style="left:743px;top:443.0px;width:17px;height:17px;border:1px solid #404040;background:#fff"></div>
<div class="t" style="left:764px;top:446.3px;font-size:13px;color:#000;transform:scaleX(.962);transform-origin:0 0;">Insert rows</div>
<div class="a" style="left:743px;top:461.0px;width:17px;height:17px;border:1px solid #404040;background:#fff"></div>
<div class="t" style="left:764px;top:464.3px;font-size:13px;color:#000;transform:scaleX(.962);transform-origin:0 0;">Insert hyperlinks</div>
<div class="a" style="left:743px;top:478.0px;width:17px;height:17px;border:1px solid #404040;background:#fff"></div>
<div class="t" style="left:764px;top:481.3px;font-size:13px;color:#000;transform:scaleX(.962);transform-origin:0 0;">Delete columns</div>
<div class="a" style="left:743px;top:496.0px;width:17px;height:17px;border:1px solid #404040;background:#fff"></div>
<div class="t" style="left:764px;top:499.3px;font-size:13px;color:#000;transform:scaleX(.962);transform-origin:0 0;">Delete rows</div>
<div class="a" style="left:1010px;top:337px;width:22px;height:177px;background:#f0f0f0"></div>
<div class="a" style="left:1011px;top:360px;width:20px;height:87px;background:#cdcdcd"></div>
<svg class="a" style="left:1010px;top:337px" width="22" height="177" fill="none" stroke="#606060" stroke-width="1.8"><path d="M6.5 17.5l4.5-4.5l4.5 4.5"/><path d="M6.5 163.5l4.5 4.5l4.5-4.5"/></svg>
<div class="a" style="left:812px;top:530px;width:104px;height:30px;background:#e1e1e1;border:2px solid #0078d7"></div>
<div class="t" style="left:855px;top:539.0px;font-size:13px;color:#000;">OK</div>
<div class="a" style="left:929px;top:530px;width:104px;height:30px;background:#e1e1e1;border:1px solid #adadad"></div>
<div class="t" style="left:962px;top:539.0px;font-size:13px;color:#000;">Cancel</div>

</div>

</body></html>
